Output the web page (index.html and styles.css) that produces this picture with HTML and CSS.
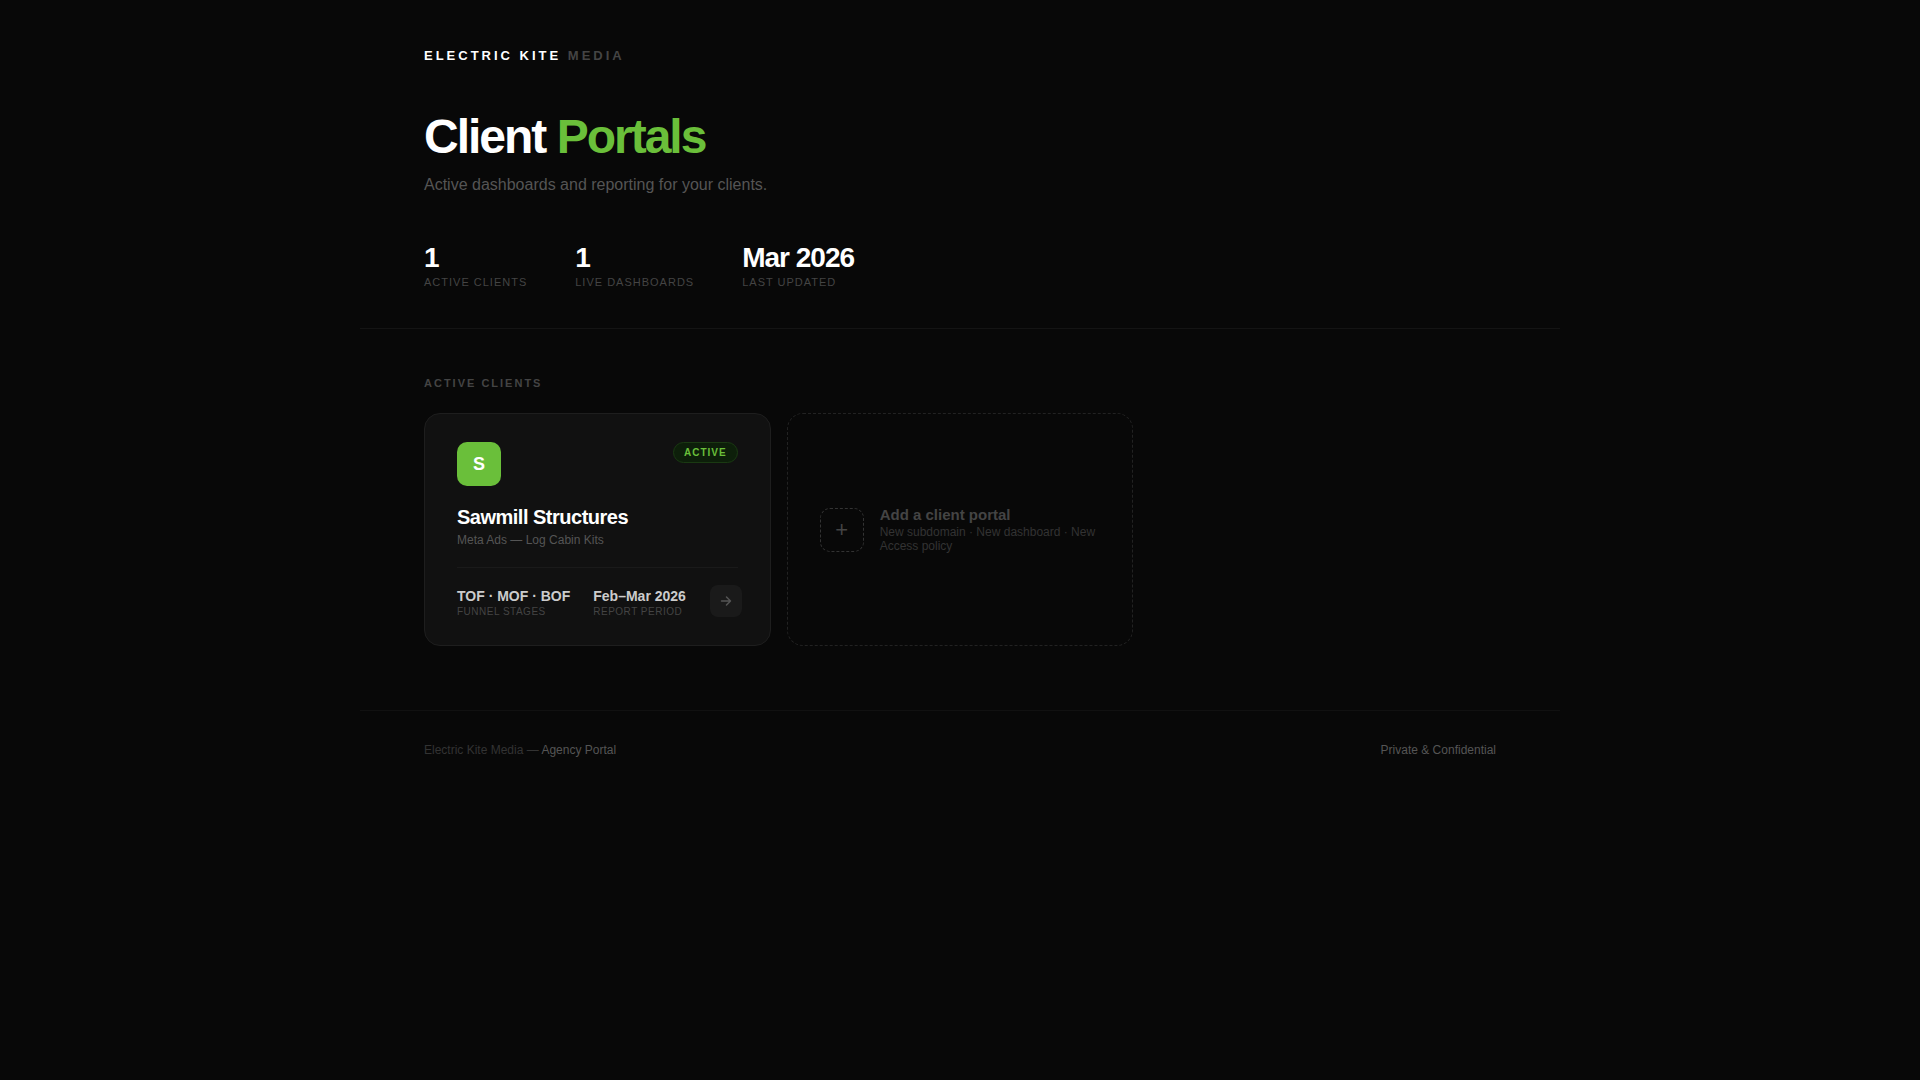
FILE: index.html
```
<!DOCTYPE html>
<html lang="en">
<head>
    <meta charset="UTF-8">
    <meta name="viewport" content="width=device-width, initial-scale=1.0">
    <title>Electric Kite Media - Client Portals</title>
    <link rel="stylesheet" href="styles.css">
</head>
<body>
    <div class="page">
        <header class="header">
            <div class="logo">Electric Kite <span>Media</span></div>
            <h1>Client <span>Portals</span></h1>
            <p class="subtitle">Active dashboards and reporting for your clients.</p>

            <div class="stats">
                <div class="stat">
                    <div class="stat-value">1</div>
                    <div class="stat-label">Active Clients</div>
                </div>
                <div class="stat">
                    <div class="stat-value">1</div>
                    <div class="stat-label">Live Dashboards</div>
                </div>
                <div class="stat">
                    <div class="stat-value">Mar 2026</div>
                    <div class="stat-label">Last Updated</div>
                </div>
            </div>
        </header>

        <main class="clients">
            <h2 class="section-label">Active Clients</h2>

            <div class="client-grid">
                <a class="card" href="#sawmill">
                    <div class="card-top">
                        <div class="card-icon">S</div>
                        <span class="badge">Active</span>
                    </div>
                    <h3 class="card-name">Sawmill Structures</h3>
                    <p class="card-desc">Meta Ads — Log Cabin Kits</p>
                    <div class="card-meta">
                        <div>
                            <div class="meta-value">TOF · MOF · BOF</div>
                            <div class="meta-label">Funnel Stages</div>
                        </div>
                        <div>
                            <div class="meta-value">Feb–Mar 2026</div>
                            <div class="meta-label">Report Period</div>
                        </div>
                        <div class="card-arrow">
                            <svg width="14" height="14" viewBox="0 0 14 14" fill="none" stroke="currentColor" stroke-width="1.5" stroke-linecap="round" stroke-linejoin="round">
                                <path d="M2.5 7h9M7.5 3l4 4-4 4"/>
                            </svg>
                        </div>
                    </div>
                </a>

                <div class="card-add">
                    <div class="add-icon">+</div>
                    <div>
                        <h3 class="add-title">Add a client portal</h3>
                        <p class="add-desc">New subdomain · New dashboard · New Access policy</p>
                    </div>
                </div>
            </div>
        </main>

        <footer class="footer">
            <p>Electric Kite Media — <span>Agency Portal</span></p>
            <p><span>Private &amp; Confidential</span></p>
        </footer>
    </div>
</body>
</html>
```
FILE: styles.css
```
:root {
    --bg: #080808;
    --surface: #111;
    --line: #141414;
    --border: #1e1e1e;
    --green: #6abf3a;
    --muted: #555;
    --dim: #444;
    --faint: #333;
}

* {
    box-sizing: border-box;
    margin: 0;
    padding: 0;
}

body {
    font-family: "Liberation Sans", Arial, sans-serif;
    background: var(--bg);
    color: #fff;
    min-height: 100vh;
}

.page {
    max-width: 1200px;
    margin: 0 auto;
}

/* Header */
.header {
    padding: 48px 64px 40px;
    border-bottom: 1px solid var(--line);
}

.logo {
    font-size: 13px;
    font-weight: 700;
    letter-spacing: 3px;
    text-transform: uppercase;
    margin-bottom: 48px;
}

.logo span {
    color: var(--dim);
}

h1 {
    font-size: 48px;
    line-height: 51px;
    letter-spacing: -2px;
    margin-bottom: 14px;
}

h1 span {
    color: var(--green);
}

.subtitle {
    font-size: 16px;
    color: var(--muted);
}

.stats {
    display: flex;
    flex-wrap: wrap;
    gap: 48px;
    margin-top: 48px;
}

.stat-value {
    font-size: 28px;
    font-weight: 700;
    letter-spacing: -1px;
}

.stat-label {
    font-size: 11px;
    letter-spacing: 1px;
    text-transform: uppercase;
    color: var(--dim);
    margin-top: 2px;
}

/* Clients */
.clients {
    padding: 48px 64px 64px;
}

.section-label {
    font-size: 11px;
    letter-spacing: 2px;
    text-transform: uppercase;
    color: var(--dim);
    margin-bottom: 24px;
}

.client-grid {
    display: grid;
    grid-template-columns: repeat(auto-fill, minmax(320px, 1fr));
    gap: 16px;
}

.card {
    display: block;
    background: var(--surface);
    border: 1px solid var(--border);
    border-radius: 16px;
    padding: 28px 32px;
    color: inherit;
    text-decoration: none;
}

.card-top {
    display: flex;
    justify-content: space-between;
    align-items: flex-start;
    margin-bottom: 20px;
}

.card-icon {
    display: flex;
    align-items: center;
    justify-content: center;
    width: 44px;
    height: 44px;
    border-radius: 10px;
    background: var(--green);
    font-size: 18px;
    font-weight: 700;
}

.badge {
    font-size: 10px;
    font-weight: 700;
    letter-spacing: 1px;
    text-transform: uppercase;
    color: var(--green);
    background: #0d1f0a;
    border: 1px solid #1a3a12;
    border-radius: 20px;
    padding: 4px 10px;
}

.card-name {
    font-size: 20px;
    letter-spacing: -0.5px;
    margin-bottom: 4px;
}

.card-desc {
    font-size: 12px;
    color: var(--muted);
    margin-bottom: 20px;
}

.card-meta {
    display: flex;
    gap: 23px;
    padding-top: 20px;
    border-top: 1px solid #1a1a1a;
    white-space: nowrap;
}

.meta-value {
    font-size: 14px;
    font-weight: 700;
    color: #ccc;
}

.meta-label {
    font-size: 10px;
    letter-spacing: 0.5px;
    text-transform: uppercase;
    color: var(--dim);
    margin-top: 2px;
}

.card-arrow {
    display: flex;
    flex-shrink: 0;
    align-items: center;
    justify-content: center;
    width: 32px;
    height: 32px;
    margin: -3px -4px 0 auto;
    border-radius: 8px;
    background: #1a1a1a;
    color: var(--muted);
}

.card-add {
    display: flex;
    align-items: center;
    gap: 16px;
    border: 1px dashed #222;
    border-radius: 16px;
    padding: 28px 32px;
}

.add-icon {
    display: flex;
    flex-shrink: 0;
    align-items: center;
    justify-content: center;
    width: 44px;
    height: 44px;
    border: 1px dashed var(--faint);
    border-radius: 10px;
    font-size: 22px;
    color: var(--dim);
}

.add-title {
    font-size: 15px;
    color: var(--dim);
    margin-bottom: 2px;
}

.add-desc {
    font-size: 12px;
    color: var(--faint);
}

/* Footer */
.footer {
    display: flex;
    justify-content: space-between;
    padding: 32px 64px;
    border-top: 1px solid #111;
    font-size: 12px;
    color: var(--faint);
}

.footer span {
    color: var(--muted);
}

@media (max-width: 768px) {
    .header,
    .clients,
    .footer {
        padding-left: 24px;
        padding-right: 24px;
    }
}
```
